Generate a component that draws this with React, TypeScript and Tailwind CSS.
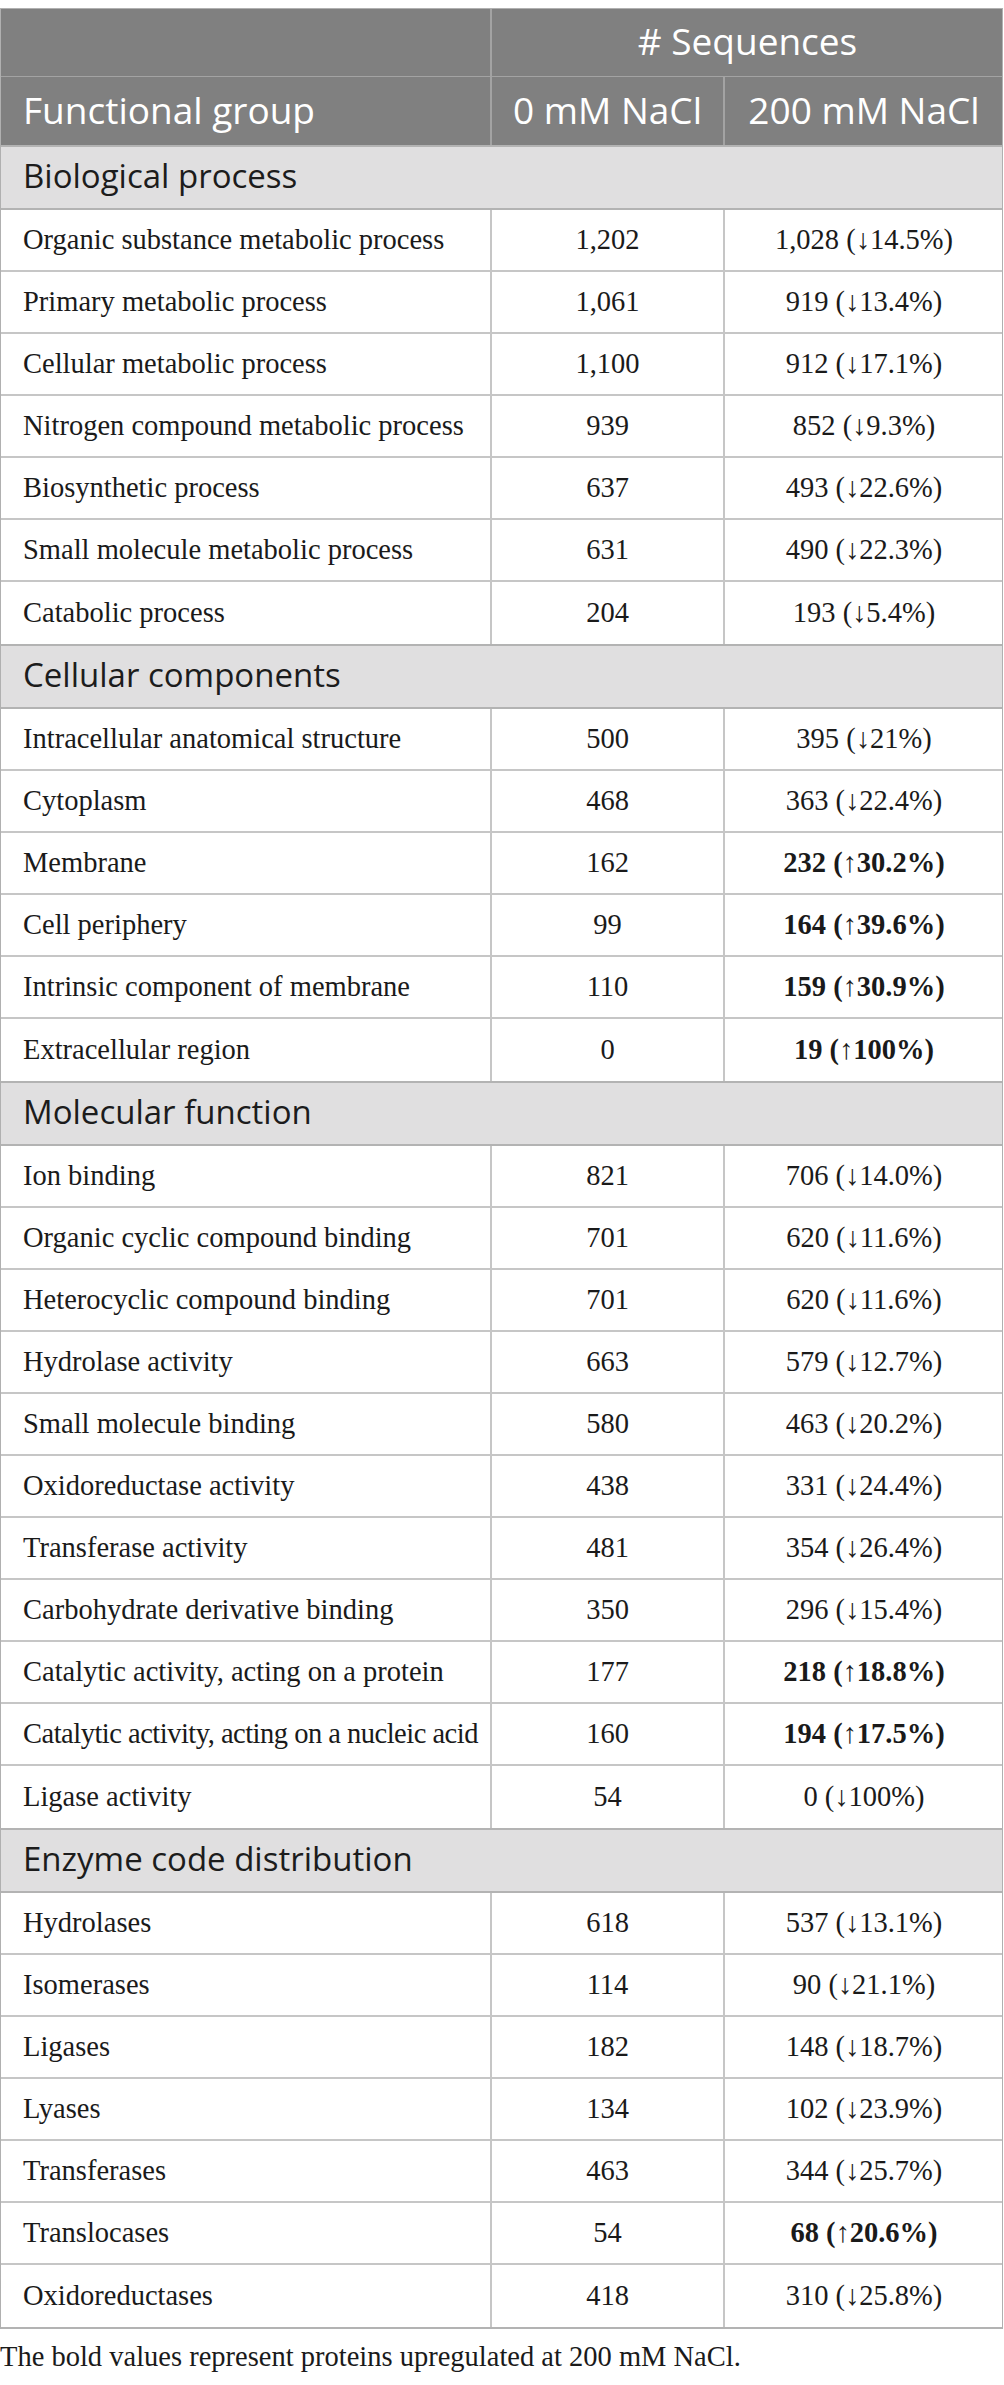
import React from 'react';

type Row = { name: string; a: string; b: string; bold?: boolean; tight?: boolean };
type Section = { title: string; rows: Row[] };

const sections: Section[] = [
  {
    title: 'Biological process',
    rows: [
      { name: 'Organic substance metabolic process', a: '1,202', b: '1,028 (↓14.5%)' },
      { name: 'Primary metabolic process', a: '1,061', b: '919 (↓13.4%)' },
      { name: 'Cellular metabolic process', a: '1,100', b: '912 (↓17.1%)' },
      { name: 'Nitrogen compound metabolic process', a: '939', b: '852 (↓9.3%)' },
      { name: 'Biosynthetic process', a: '637', b: '493 (↓22.6%)' },
      { name: 'Small molecule metabolic process', a: '631', b: '490 (↓22.3%)' },
      { name: 'Catabolic process', a: '204', b: '193 (↓5.4%)' },
    ],
  },
  {
    title: 'Cellular components',
    rows: [
      { name: 'Intracellular anatomical structure', a: '500', b: '395 (↓21%)' },
      { name: 'Cytoplasm', a: '468', b: '363 (↓22.4%)' },
      { name: 'Membrane', a: '162', b: '232 (↑30.2%)', bold: true },
      { name: 'Cell periphery', a: '99', b: '164 (↑39.6%)', bold: true },
      { name: 'Intrinsic component of membrane', a: '110', b: '159 (↑30.9%)', bold: true },
      { name: 'Extracellular region', a: '0', b: '19 (↑100%)', bold: true },
    ],
  },
  {
    title: 'Molecular function',
    rows: [
      { name: 'Ion binding', a: '821', b: '706 (↓14.0%)' },
      { name: 'Organic cyclic compound binding', a: '701', b: '620 (↓11.6%)' },
      { name: 'Heterocyclic compound binding', a: '701', b: '620 (↓11.6%)' },
      { name: 'Hydrolase activity', a: '663', b: '579 (↓12.7%)' },
      { name: 'Small molecule binding', a: '580', b: '463 (↓20.2%)' },
      { name: 'Oxidoreductase activity', a: '438', b: '331 (↓24.4%)' },
      { name: 'Transferase activity', a: '481', b: '354 (↓26.4%)' },
      { name: 'Carbohydrate derivative binding', a: '350', b: '296 (↓15.4%)' },
      { name: 'Catalytic activity, acting on a protein', a: '177', b: '218 (↑18.8%)', bold: true },
      { name: 'Catalytic activity, acting on a nucleic acid', a: '160', b: '194 (↑17.5%)', bold: true, tight: true },
      { name: 'Ligase activity', a: '54', b: '0 (↓100%)' },
    ],
  },
  {
    title: 'Enzyme code distribution',
    rows: [
      { name: 'Hydrolases', a: '618', b: '537 (↓13.1%)' },
      { name: 'Isomerases', a: '114', b: '90 (↓21.1%)' },
      { name: 'Ligases', a: '182', b: '148 (↓18.7%)' },
      { name: 'Lyases', a: '134', b: '102 (↓23.9%)' },
      { name: 'Transferases', a: '463', b: '344 (↓25.7%)' },
      { name: 'Translocases', a: '54', b: '68 (↑20.6%)', bold: true },
      { name: 'Oxidoreductases', a: '418', b: '310 (↓25.8%)' },
    ],
  },
];

const sans = "font-['Open_Sans',sans-serif]";
const serif = "font-['Liberation_Serif',serif]";

export default function App() {
  return (
    <div className="min-h-screen bg-white pt-2">
      <div className="w-[1003px] border-x border-t border-[#b0b0b0]">
        {/* header */}
        <div className={`${sans} bg-[#808080] text-white text-[37px] leading-none`}>
          <div className="grid h-[68px] grid-cols-[489px_513px] border-b border-[#a3a3a3]">
            <div />
            <div className="flex items-center justify-center border-l-2 border-[#a3a3a3] pb-1"># Sequences</div>
          </div>
          <div className="grid h-[68px] grid-cols-[489px_233px_280px]">
            <div className="flex items-center px-[22px] pb-1">Functional group</div>
            <div className="flex items-center justify-center border-l-2 border-[#a3a3a3] pb-1">0 mM NaCl</div>
            <div className="flex items-center justify-center border-l-2 border-[#a3a3a3] pb-1">200 mM NaCl</div>
          </div>
        </div>

        {sections.map((s) => (
          <div key={s.title}>
            <div className={`${sans} flex h-[65px] items-center border-y-2 border-[#b3b3b3] bg-[#e0dfe0] px-[22px] pb-1 text-[33px] leading-none text-[#1c1c1c]`}>
              {s.title}
            </div>
            {s.rows.map((r, i) => (
              <div
                key={r.name}
                className={`${serif} grid h-[62px] grid-cols-[489px_233px_280px] text-[28.5px] leading-none text-[#1a1a1a] ${i < s.rows.length - 1 ? 'border-b-2 border-[#c6c6c6]' : ''}`}
              >
                <div className={`flex items-center whitespace-nowrap pl-[22px] ${r.tight ? 'tracking-[-0.5px]' : ''}`}>{r.name}</div>
                <div className="flex items-center justify-center border-l-2 border-[#c6c6c6]">{r.a}</div>
                <div className={`flex items-center justify-center border-l-2 border-[#c6c6c6] ${r.bold ? 'font-bold' : ''}`}>{r.b}</div>
              </div>
            ))}
          </div>
        ))}
        <div className="border-b-2 border-[#b3b3b3]" />
      </div>
      <p className={`${serif} mt-[14px] text-[28.5px] leading-none text-[#1a1a1a]`}>
        The bold values represent proteins upregulated at 200 mM NaCl.
      </p>
    </div>
  );
}
